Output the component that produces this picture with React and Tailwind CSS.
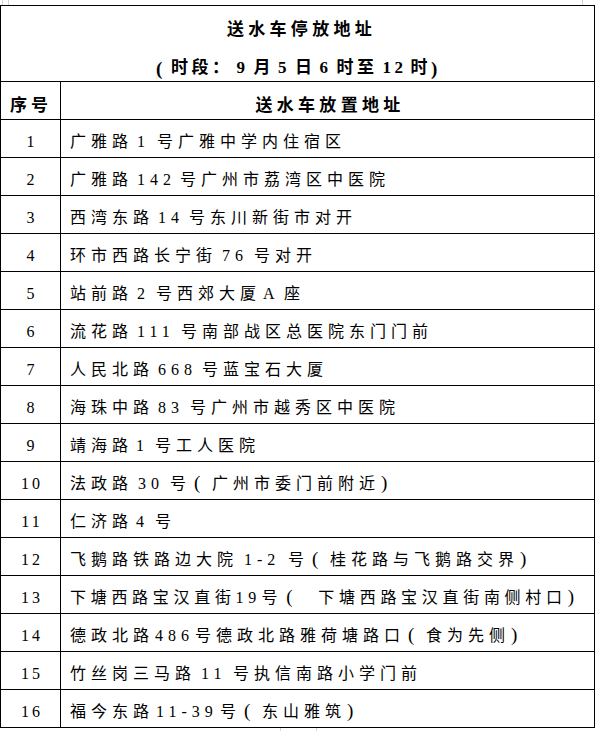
import React from "react";

const L = (l, w, pl) => ({ l, w, pl });
const P = (p, w = 21, pl = 1) => ({ p, w, pl });

const rows = [
  ["1", ["广雅路", L("1", 24, 4), "号广雅中学内住宿区"]],
  ["2", ["广雅路", L("142", 47, 4), "号广州市荔湾区中医院"]],
  ["3", ["西湾东路", L("14", 35, 4), "号东川新街市对开"]],
  ["4", ["环市西路长宁街", L("76", 37, 5), "号对开"]],
  ["5", ["站前路", L("2", 23, 4), "号西郊大厦", L("A", 23, 2), "座"]],
  ["6", ["流花路", L("111", 48, 4), "号南部战区总医院东门门前"]],
  ["7", ["人民北路", L("668", 48, 4), "号蓝宝石大厦"]],
  ["8", ["海珠中路", L("83", 36, 4), "号广州市越秀区中医院"]],
  ["9", ["靖海路", L("1", 22, 3), "号工人医院"]],
  ["10", ["法政路", L("30", 37, 5), "号", P("(", 21, 3), "广州市委门前附近", P(")")]],
  ["11", ["仁济路", L("4", 22, 3), "号"]],
  ["12", ["飞鹅路铁路边大院", L("1-2", 50, 6), "号", P("(", 21, 3), "桂花路与飞鹅路交界", P(")")]],
  ["13", ["下塘西路宝汉直街", L("19", 26, 0), "号", P("(", 36, 4), "下塘西路宝汉直街南侧村口", P(")")], true],
  ["14", ["德政北路", L("486", 41, 1), "号德政北路雅荷塘路口", P("(", 21, 3), "食为先侧", P(")")]],
  ["15", ["竹丝岗三马路", L("11", 37, 5), "号执信南路小学门前"]],
  ["16", ["福今东路", L("11-39", 66, 2), "号", P("(", 21, 3), "东山雅筑", P(")")]],
];

const font = { fontFamily: "'Liberation Serif','Noto Sans CJK SC',serif" };

function Seg({ s }) {
  if (typeof s === "string") return <>{s}</>;
  if (s.p)
    return (
      <span
        className="inline-block tracking-normal text-[19px] leading-none"
        style={{ width: s.w, paddingLeft: s.pl }}
      >
        {s.p}
      </span>
    );
  return (
    <span className="inline-block" style={{ width: s.w, paddingLeft: s.pl }}>
      {s.l}
    </span>
  );
}

function Line({ segs }) {
  return segs.map((s, i) => <Seg key={i} s={s} />);
}

const title2 = [
  P("(", 15, 0),
  "时段：",
  L("9", 21, 4),
  "月",
  L("5", 21, 4),
  "日",
  L("6", 21, 4),
  "时至",
  L("12", 33, 5),
  "时",
  P(")", 8, 0),
];

export default function App() {
  return (
    <div className="relative w-[598px] h-[731px] bg-white text-black" style={font}>
      {/* crop marks */}
      <div className="absolute left-[2px] top-0 w-px h-[5px] bg-[#d4d4d4]" />
      <div className="absolute left-[8px] top-0 w-px h-[5px] bg-[#d4d4d4]" />
      <div className="absolute left-[582px] top-0 w-px h-[5px] bg-[#d4d4d4]" />
      <div className="absolute left-[280px] top-[728px] w-px h-[3px] bg-[#d4d4d4]" />
      <div className="absolute left-[316px] top-[728px] w-px h-[3px] bg-[#d4d4d4]" />

      <div className="pt-[5px]">
        <div className="w-[595px] border border-black">
          <div className="h-[75px] flex flex-col font-bold">
            <div className="h-[38px] flex items-center justify-center pt-[10px] text-[17px] tracking-[4.3px] pl-[8px]">
              送水车停放地址
            </div>
            <div className="h-[37px] flex items-center justify-center pt-[11px] text-[17px] tracking-[3.5px] whitespace-nowrap">
              <Line segs={title2} />
            </div>
          </div>
          <div className="h-[38px] flex border-t border-black font-bold text-[17px]">
            <div className="w-[59px] flex items-center justify-center pt-[10px] tracking-[4px] pl-[1px]">序号</div>
            <div className="flex-1 flex items-center justify-center pt-[10px] border-l border-black tracking-[4.3px] pl-[5px]">
              送水车放置地址
            </div>
          </div>
          {rows.map(([n, segs, tight]) => (
            <div key={n} className="h-[38px] flex border-t border-black text-[16px]">
              <div className="w-[59px] flex items-center justify-center pt-[7px] tracking-[3px] pl-[3px]">{n}</div>
              <div
                className={
                  "flex-1 flex items-center pt-[7px] pl-[9px] border-l border-black whitespace-nowrap " +
                  (tight ? "tracking-[4.7px]" : "tracking-[5px]")
                }
              >
                <span>
                  <Line segs={segs} />
                </span>
              </div>
            </div>
          ))}
        </div>
      </div>
    </div>
  );
}
